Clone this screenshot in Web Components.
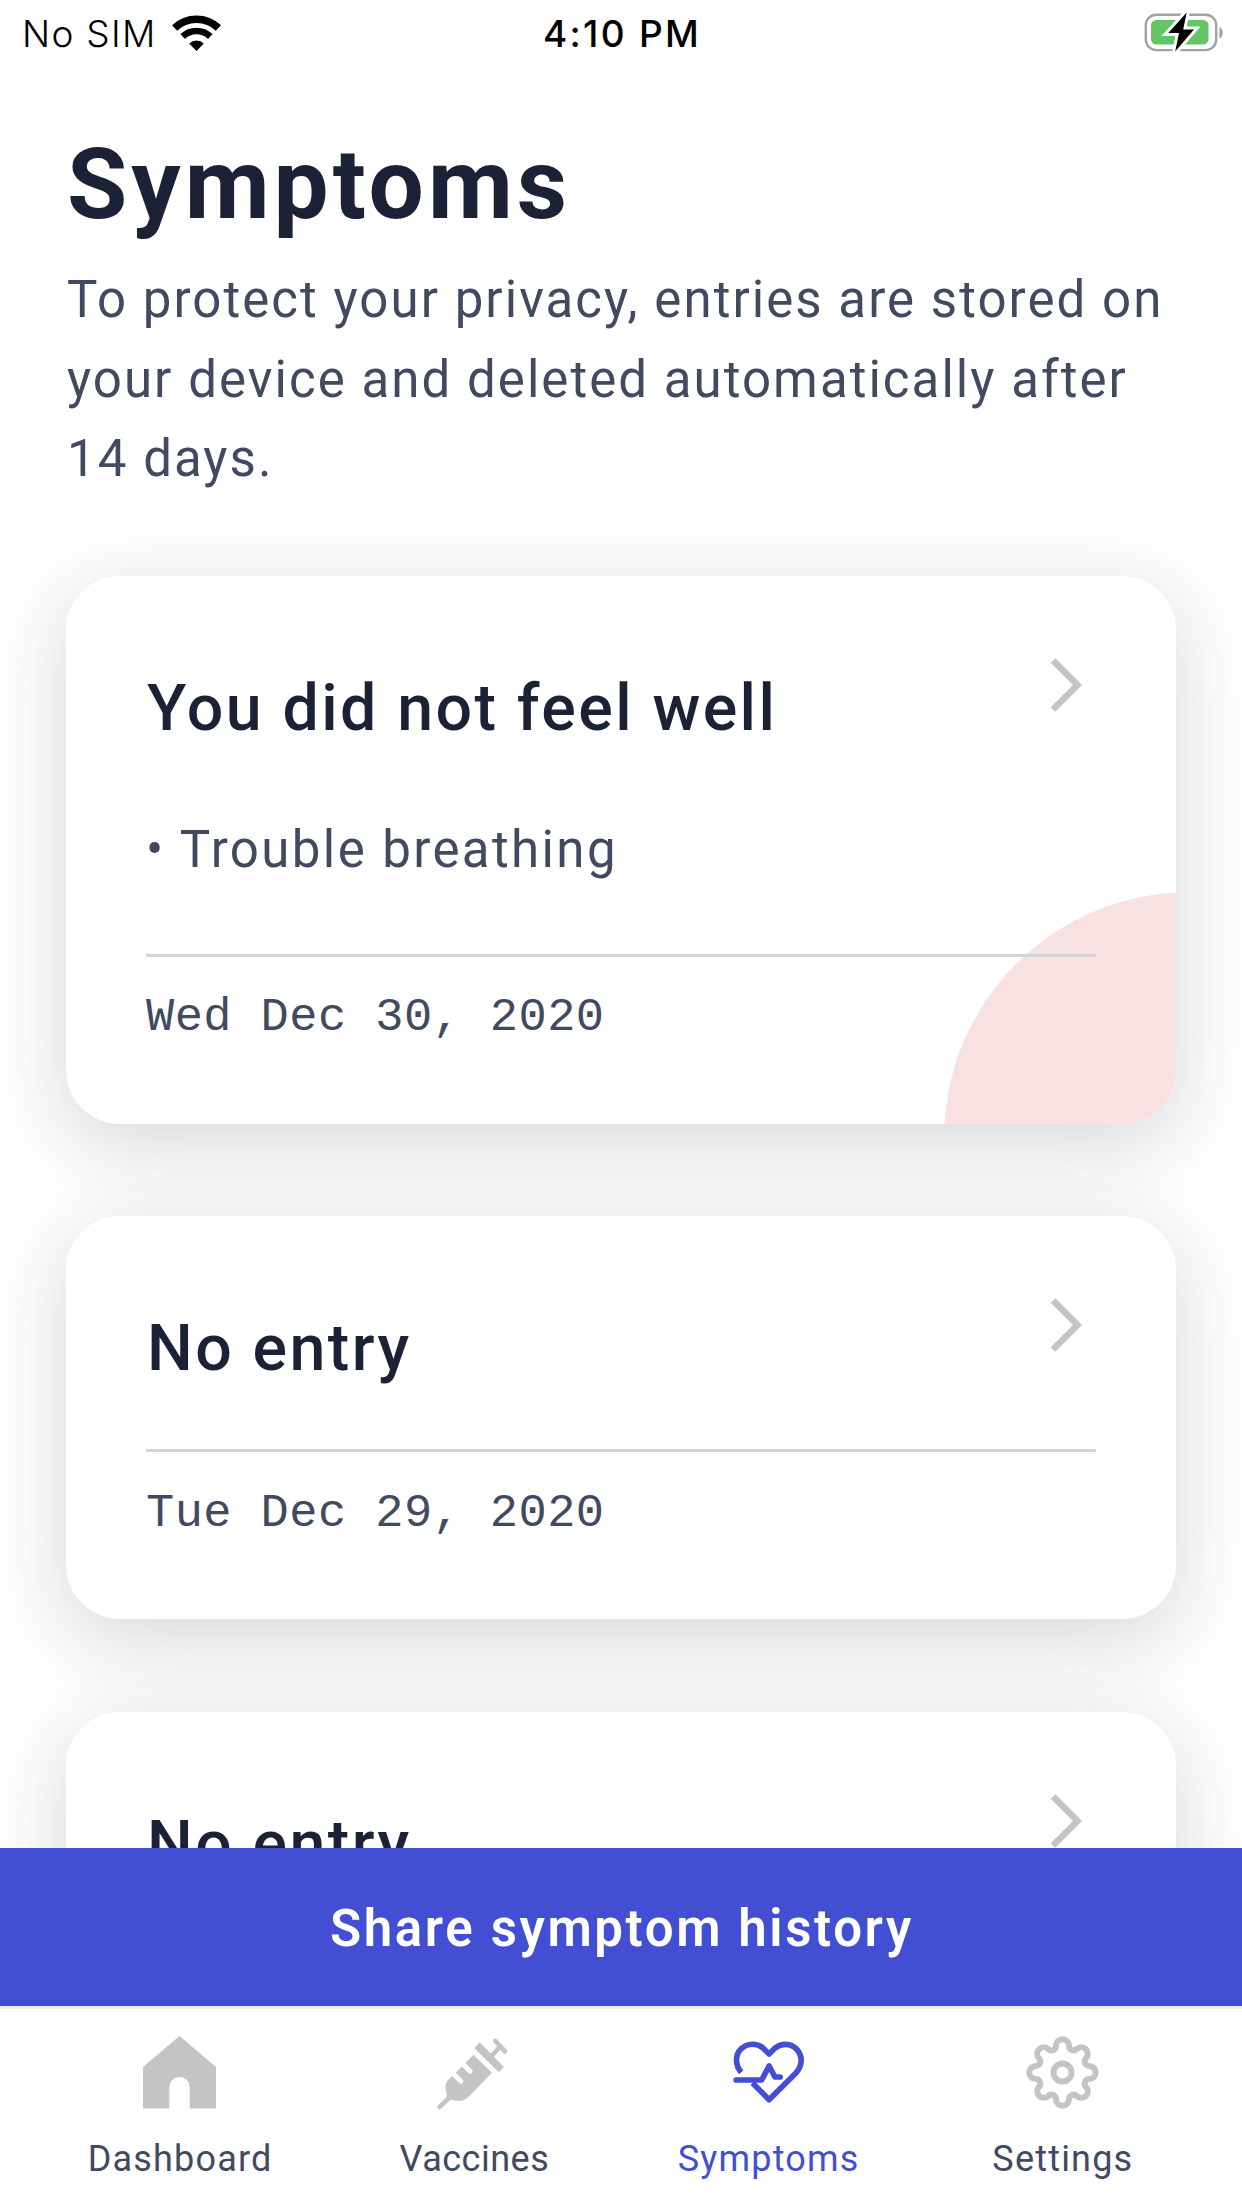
<!DOCTYPE html>
<html lang="en">
<head>
<meta charset="utf-8">
<title>Symptoms</title>
<style>
html,body{margin:0;height:2208px;overflow:hidden;background:#fff}
</style>
</head>
<body>
<symptoms-app></symptoms-app>
<script>
const define = (name, html) => {
  const t = document.createElement('template');
  t.innerHTML = html;
  customElements.define(name, class extends HTMLElement {
    constructor() {
      super();
      this.attachShadow({mode: 'open'}).append(t.content.cloneNode(true));
    }
  });
};

define('status-bar', `
<style>
:host{display:grid;grid-template-columns:1fr auto 1fr;height:68px;font:400 37px/68px Inter,sans-serif;color:#000;padding:0 18px 0 22px;box-sizing:border-box}
.l{display:flex;align-items:flex-start}
.r{display:flex;justify-content:flex-end}
.time{font-weight:500;letter-spacing:2.300px;margin-left:-2px}
.sim{font-weight:350;letter-spacing:1.300px}
svg{display:block}
.wifi{margin:15px 0 0 15px}
.bat{margin-top:11px}
</style>
<div class="l"><span class="sim">No SIM</span>
<svg class="wifi" width="50" height="37" viewBox="0 0 50 37"><g fill="none" stroke="#000"><path d="M2.600 13A31.800 31.800 0 0 1 46.400 13" stroke-width="7.400"/><path d="M10.700 21.500A20 20 0 0 1 38.300 21.500" stroke-width="6.600"/></g><path d="M24.500 36L17.200 28.400A10.500 10.500 0 0 1 31.800 28.400Z"/></svg></div>
<span class="time">4:10 PM</span>
<div class="r"><svg class="bat" width="80" height="42" viewBox="0 0 80 42"><rect x="1.800" y="3.700" width="70.400" height="35.400" rx="10.500" fill="none" stroke="#a2a2a4" stroke-width="2.400"/><path d="M75.400 16v11.500c4.400-1.600 4.400-9.900 0-11.500z" fill="#a2a2a4"/><rect x="7" y="9" width="57.500" height="24.600" rx="5.500" fill="#65c466"/><path d="M42.700 1.500L24.300 22H35L31.200 40.500L50 18.500H39.200Z" fill="#000" stroke="#fff" stroke-width="6" paint-order="stroke"/></svg></div>`);

define('page-intro', `
<style>
:host{display:block;padding:57px 66px 0;font-family:Roboto,sans-serif}
h1{margin:0 0 0 1px;font-size:98px;font-weight:700;line-height:120px;color:#1c2235;letter-spacing:4px}
p{margin:15px 0 0 1px;font-size:51px;line-height:79.600px;color:#414a60;white-space:nowrap;letter-spacing:2.050px}
</style>
<h1><slot name="title"></slot></h1><p><slot></slot></p>`);

define('entry-card', `
<style>
:host{display:block;position:relative;box-sizing:border-box;border-radius:54px;background:#fff;padding:82px 80px 75.600px;box-shadow:0 20px 82px rgba(30,38,56,.19);font-family:Roboto,sans-serif}
header{display:flex;justify-content:space-between;align-items:flex-start;height:92px;margin-bottom:59px}
h2{margin:8px 0 0 1px;font-size:64.500px;font-weight:500;line-height:84px;color:#1c2235;letter-spacing:2.400px}
.chev{margin-right:13px;display:block}
::slotted(symptom-item){margin:0 0 64.200px}
hr{border:0;height:3px;margin:0;background:#d3d4da;position:relative}
.date{position:relative;margin:31.600px 0 0;height:60px;font:400 47px/60px "Liberation Mono",monospace;letter-spacing:.450px;color:#414a60;white-space:pre}
.clip{position:absolute;inset:0;border-radius:54px;overflow:hidden;display:none}
.clip i{position:absolute;left:877.500px;top:316.600px;width:492px;height:492px;border-radius:50%;background:#f9e1e1}
:host([unwell]) .clip{display:block}
</style>
<div class="clip"><i></i></div>
<header><h2><slot name="title"></slot></h2><svg class="chev" width="33" height="54" viewBox="0 0 33 54"><path d="M3 2.500L27.500 27L3 51.500" fill="none" stroke="#c4c4c6" stroke-width="6.500"/></svg></header>
<slot></slot><hr><div class="date"><slot name="date"></slot></div>`);

define('symptom-item', `
<style>:host{display:block;position:relative;padding-top:1px;font:400 51px/80px Roboto,sans-serif;color:#414a60;letter-spacing:2.400px}</style>• <slot></slot>`);

define('share-button', `
<style>
:host{display:block;flex:none}
button{display:flex;align-items:center;justify-content:center;width:100%;height:158px;border:0;padding:4px 0 0 2px;background:#424fd3;color:#fff;font:600 51px/60px Roboto,sans-serif;letter-spacing:2.600px}
</style><button><slot></slot></button>`);

define('tab-bar', `<style>:host{display:flex;flex:none;box-sizing:border-box;height:202px;border-top:3px solid #ecedf4;background:#fff;padding:27px 32.500px 0}::slotted(*){flex:1 1 0}</style><slot></slot>`);

const gearPath = () => {
  let d = '';
  const pt = (x, y, a) => {
    const c = Math.cos(a), s = Math.sin(a);
    return (x * c - y * s + 36.5).toFixed(2) + ' ' + (x * s + y * c + 36.5).toFixed(2);
  };
  for (let k = 0; k < 8; k++) {
    const a = k * Math.PI / 4;
    d += (k ? '' : 'M' + pt(26.68, -6.5, a)) + 'A6.5 6.5 0 0 1 ' + pt(26.68, 6.5, a) + 'A4.6 4.6 0 0 0 ' + pt(26.68, -6.5, a + Math.PI / 4);
  }
  return d + 'Z';
};
const icons = {
  home: '<path fill="currentColor" d="M36.500 0L73 31V72.500H46.700V51.200A10.200 10.200 0 0 0 26.300 51.200V72.500H0V31Z"/>',
  syringe: '<g transform="translate(0 3)"><path fill="currentColor" d="M36.600 15.700L54.800 33.700L33.700 55.700Q28 61.500 23 62Q18 62 12.300 60.300L10.100 57.700Q8.400 51 8.400 46Q9.500 42 15.100 37.300ZM42.600 3.300L37.300 9.300L61.900 33.300L66.900 28Z"/><path d="M58.400 2L68 12.400M63.500 7.300L53.500 18M12 59L2.500 68" stroke="currentColor" stroke-width="4.600" stroke-linecap="round"/><path d="M15 33.400L23.900 42.200M24.700 23.800L33.200 32.200" stroke="#fff" stroke-width="4.800" stroke-linecap="round"/></g>',
  heart: '<g transform="translate(1.500 5)" fill="none" stroke="currentColor" stroke-width="5.700" stroke-linejoin="round"><path d="M7.800 31.300C1.500 24.500 1.500 14 7.200 8.200C14.500 1.600 23.500 2 29.500 7L35.600 13L41.600 7C48 2 57 1.800 63 8C69.500 15 69 24.500 62.700 31.700L35.600 58.700L19 42"/><path stroke-linecap="round" d="M2.700 39H28.200L35.600 25L41.500 36H46.600"/></g>',
  gear: '<g fill="none" stroke="currentColor" stroke-width="6"><path d="' + gearPath() + '"/><circle cx="36.500" cy="36.500" r="9"/></g>'
};
customElements.define('tab-item', class extends HTMLElement {
  connectedCallback() {
    this.attachShadow({mode: 'open'}).innerHTML = `<style>
:host{display:flex;flex-direction:column;align-items:center;font:400 36px/44px Roboto,sans-serif;color:#414a60;letter-spacing:1.200px}
:host([icon=syringe]){letter-spacing:.500px}
svg{display:block;color:#c4c4c6;margin-bottom:28px;overflow:visible}
span{padding-left:1px}
:host([active]),:host([active]) svg{color:#424fd3}
</style><svg width="73" height="73" viewBox="0 0 73 73">${icons[this.getAttribute('icon')]}</svg><span><slot></slot></span>`;
  }
});

define('symptoms-app', `
<style>
:host{display:flex;flex-direction:column;width:1242px;height:2208px;background:#fff;overflow:hidden}
main{flex:1;min-height:0;overflow:hidden}
.list{display:flex;flex-direction:column;gap:92.200px;padding:76.800px 66px 0}
</style>
<main>
<status-bar></status-bar>
<page-intro><span slot="title">Symptoms</span>To protect your privacy, entries are stored on<br>your device and deleted automatically after<br>14 days.</page-intro>
<div class="list">
<entry-card unwell><span slot="title">You did not feel well</span><symptom-item>Trouble breathing</symptom-item><span slot="date">Wed Dec 30, 2020</span></entry-card>
<entry-card><span slot="title">No entry</span><span slot="date">Tue Dec 29, 2020</span></entry-card>
<entry-card><span slot="title">No entry</span></entry-card>
</div>
</main>
<share-button>Share symptom history</share-button>
<tab-bar><tab-item icon="home">Dashboard</tab-item><tab-item icon="syringe">Vaccines</tab-item><tab-item icon="heart" active>Symptoms</tab-item><tab-item icon="gear">Settings</tab-item></tab-bar>`);
</script>
</body>
</html>
